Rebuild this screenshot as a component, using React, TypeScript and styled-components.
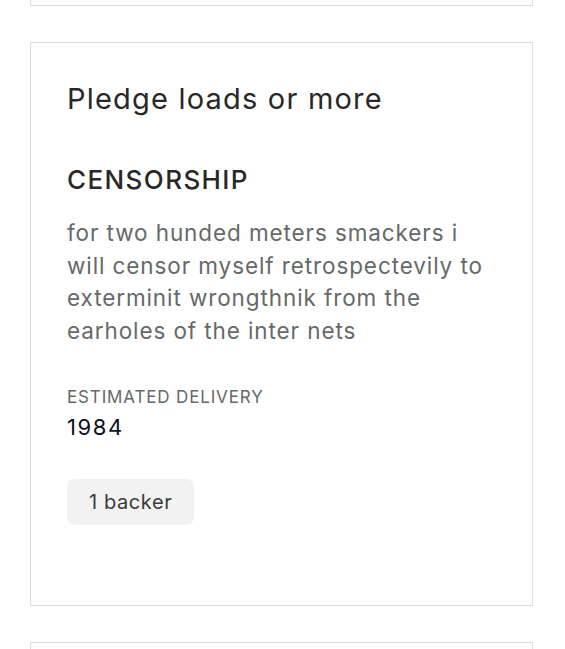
import React from "react";
import styled, { createGlobalStyle } from "styled-components";

const Global = createGlobalStyle`
  html, body { margin: 0; padding: 0; background: #fff; }
  body { font-family: Inter, "Noto Sans", sans-serif; -webkit-font-smoothing: antialiased; }
  * { box-sizing: border-box; }
`;

const List = styled.div`
  display: flex;
  flex-direction: column;
  gap: 36px;
  padding: 0 32px 0 30px;
`;

const Card = styled.div<{ $stub?: "top" | "bottom" }>`
  border: 1px solid #dcdcdc;
  background: #fff;
  ${(p) => (p.$stub === "top" ? "border-top: none; height: 6px;" : "")}
  ${(p) => (p.$stub === "bottom" ? "border-bottom: none; height: 8px;" : "")}
`;

const Body = styled.div`
  padding: 36px 36px 80px 36px;
  display: flex;
  flex-direction: column;
`;

const Amount = styled.h2`
  margin: 0;
  font-size: 29px;
  font-weight: 400;
  line-height: 40px;
  color: #282828;
  letter-spacing: 1.2px;
`;

const Title = styled.h3`
  margin: 45px 0 0;
  font-size: 26px;
  font-weight: 500;
  line-height: 32px;
  color: #282828;
  letter-spacing: 1.4px;
`;

const Description = styled.p`
  margin: 21px 0 0;
  font-size: 22.5px;
  line-height: 32.5px;
  color: #656969;
  letter-spacing: 0.9px;
`;

const Label = styled.div`
  margin-top: 38px;
  font-size: 17px;
  line-height: 24px;
  letter-spacing: 0.85px;
  text-transform: uppercase;
  color: #656969;
`;

const Value = styled.div`
  font-size: 22px;
  line-height: 36px;
  letter-spacing: 1.6px;
  color: #0b1023;
`;

const Badge = styled.div`
  margin-top: 34px;
  align-self: flex-start;
  background: #f2f2f2;
  border-radius: 8px;
  height: 46px;
  padding: 0 22px;
  display: flex;
  align-items: center;
  font-size: 20px;
  letter-spacing: 0.6px;
  color: #3a3a3a;
`;

export default function App() {
  return (
    <>
      <Global />
      <List>
        <Card $stub="top" />
        <Card>
          <Body>
            <Amount>Pledge loads or more</Amount>
            <Title>CENSORSHIP</Title>
            <Description>
              for two hunded meters smackers i will censor myself retrospectevily to exterminit
              wrongthnik from the earholes of the inter nets
            </Description>
            <Label>Estimated delivery</Label>
            <Value>1984</Value>
            <Badge>1 backer</Badge>
          </Body>
        </Card>
        <Card $stub="bottom" />
      </List>
    </>
  );
}
